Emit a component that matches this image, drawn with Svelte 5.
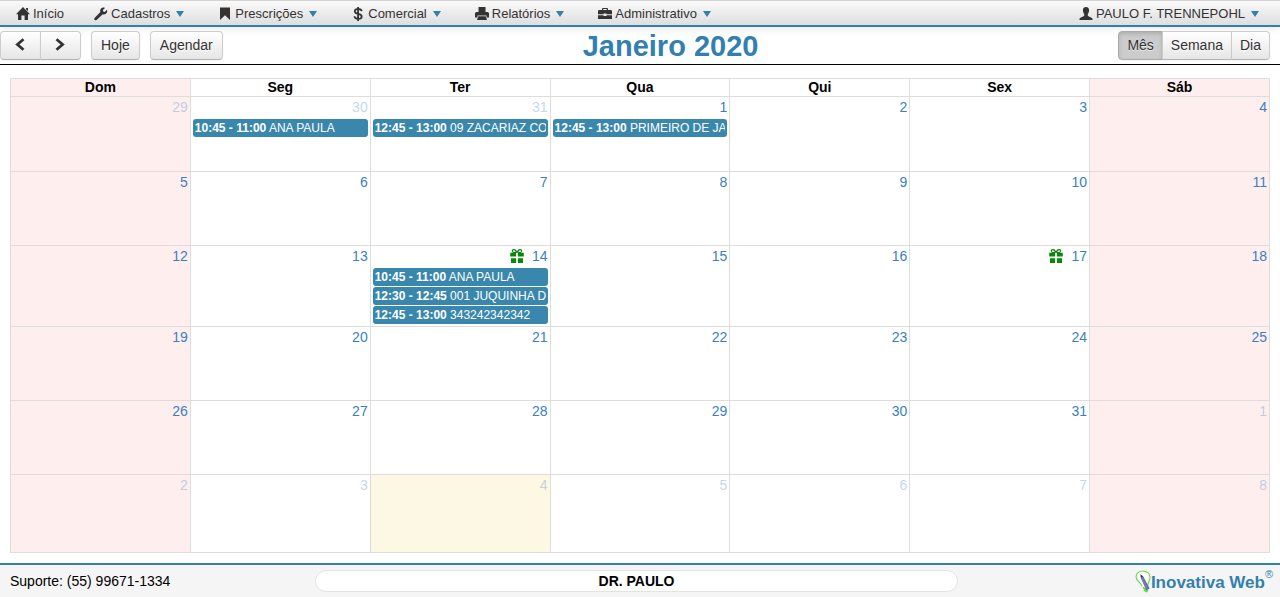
<script>
    const menu = [
        { label: 'Início', icon: 'home' },
        { label: 'Cadastros', icon: 'wrench', caret: true },
        { label: 'Prescrições', icon: 'bookmark', caret: true },
        { label: 'Comercial', icon: 'usd', caret: true },
        { label: 'Relatórios', icon: 'print', caret: true },
        { label: 'Administrativo', icon: 'briefcase', caret: true }
    ];

    const icons = {
        home: 'M7 0 14 7.2H12V13H8.6V8.4H5.4V13H2V7.2H0L7 0ZM10 .9H12V4.2L10 2.3Z',
        wrench: 'M12.9 2.8 10.8 4.9 9.2 4.6 8.9 3 11 .9C9.4.1 7.6.7 6.7 2 6.1 2.9 6 4 6.4 5L.8 10.7C.1 11.4.1 12.3.7 12.9 1.3 13.5 2.2 13.4 2.9 12.8L8.7 7.3C9.8 7.7 11.1 7.5 12.1 6.6 13.2 5.6 13.5 4.1 12.9 2.8Z',
        bookmark: 'M2 .5H12V13L7 8.3 2 13Z',
        print: 'M3.5 0H10.5V5H12.5Q14 5 14 6.5V10.5H11.5V8.5H2.5V10.5H0V6.5Q0 5 1.5 5H3.5ZM3.3 9.3H10.7L12 13H2Z',
        briefcase: 'M5 1H9Q10 1 10 2V3H12.8Q14 3 14 4.2V7.2H8.5V6.5H5.5V7.2H0V4.2Q0 3 1.2 3H4V2Q4 1 5 1ZM5.2 2.1V3H8.8V2.1ZM0 8.2H5.5V9H8.5V8.2H14V12H0Z',
        user: 'M7 0C9.2 0 10.2 1.5 10.1 3.6 10 5.4 9.2 6.5 8.8 7.2V8.7C8.8 9.3 13.5 10.4 13.5 12V13H.5V12C.5 10.4 5.2 9.3 5.2 8.7V7.2C4.8 6.5 4 5.4 3.9 3.6 3.8 1.5 4.8 0 7 0Z',
        gift: 'M1 3.8H3.1C.9 2.5 1.7-.1 4 .1 5.6.2 6.3 1.4 7 2.1 7.7 1.4 8.4.2 10 .1 12.3-.1 13.1 2.5 10.9 3.8H13.8V7.6H7.9V3.8H6.1V7.6H.2V3.8ZM3.7 1.2C2.4 1.3 2.8 2.9 4.2 2.9H5.7C5.2 2 4.7 1.1 3.7 1.2ZM10.3 1.2C9.3 1.1 8.8 2 8.3 2.9H9.8C11.2 2.9 11.6 1.3 10.3 1.2ZM1 9.2H6.1V14H1ZM7.9 9.2H13V14H7.9Z'
    };
    const strokes = {
        usd: 'M10.7 4.2C10.4 2.6 9.1 2 7.1 2 5.1 2 3.8 2.8 3.8 4.4 3.8 7.7 10.7 5.9 10.7 9.4 10.7 11.1 9.3 11.8 7.2 11.8 4.9 11.8 3.6 11 3.5 9.2M7.1 0V14',
        prev: 'M10.5 1.2 4.4 6.5 10.5 11.8',
        next: 'M3.5 1.2 9.6 6.5 3.5 11.8'
    };

    const weekDays = ['Dom', 'Seg', 'Ter', 'Qua', 'Qui', 'Sex', 'Sáb'];

    const events = {
        '11-30': [{ time: '10:45 - 11:00', title: 'ANA PAULA' }],
        '11-31': [{ time: '12:45 - 13:00', title: '09 ZACARIAZ COR' }],
        '0-1': [{ time: '12:45 - 13:00', title: 'PRIMEIRO DE JAN' }],
        '0-14': [
            { time: '10:45 - 11:00', title: 'ANA PAULA' },
            { time: '12:30 - 12:45', title: '001 JUQUINHA DO' },
            { time: '12:45 - 13:00', title: '343242342342' }
        ]
    };
    const birthdays = ['0-14', '0-17'];
    const today = '1-4';

    // six weeks, starting on the sunday before january 1st
    const weeks = [];
    for (let w = 0; w < 6; w++) {
        const week = [];
        for (let d = 0; d < 7; d++) {
            const date = new Date(2020, 0, w * 7 + d - 2);
            const key = date.getMonth() + '-' + date.getDate();
            week.push({
                key,
                day: date.getDate(),
                other: date.getMonth() !== 0,
                weekend: d === 0 || d === 6,
                events: events[key] || []
            });
        }
        weeks.push(week);
    }

    let view = $state('Mês');
</script>

{#snippet icon(name)}
    <svg class="icon" viewBox="0 0 14 14" aria-hidden="true">
        {#if strokes[name]}
            <path d={strokes[name]} fill="none" stroke="currentColor" stroke-width={name === 'usd' ? 1.8 : 2.8} />
        {:else}
            <path d={icons[name]} fill="currentColor" fill-rule="evenodd" />
        {/if}
    </svg>
{/snippet}

<div class="page">
    <nav class="menu">
        {#each menu as item}
            <a class="menu__item" href="#{item.icon}">
                {@render icon(item.icon)}
                <span>{item.label}</span>
                {#if item.caret}<i class="caret"></i>{/if}
            </a>
        {/each}
        <a class="menu__item menu__user" href="#user">
            {@render icon('user')}
            <span>PAULO F. TRENNEPOHL</span>
            <i class="caret"></i>
        </a>
    </nav>

    <header class="toolbar">
        <div class="toolbar__left">
            <div class="group group--nav">
                <button class="btn" aria-label="Anterior">{@render icon('prev')}</button>
                <button class="btn" aria-label="Próximo">{@render icon('next')}</button>
            </div>
            <button class="btn">Hoje</button>
            <button class="btn">Agendar</button>
        </div>
        <h1>Janeiro 2020</h1>
        <div class="group">
            {#each ['Mês', 'Semana', 'Dia'] as name}
                <button class="btn" class:active={view === name} onclick={() => (view = name)}>{name}</button>
            {/each}
        </div>
    </header>

    <main>
        <table class="calendar">
            <thead>
                <tr>
                    {#each weekDays as name, i}
                        <th class:weekend={i === 0 || i === 6}>{name}</th>
                    {/each}
                </tr>
            </thead>
            <tbody>
                {#each weeks as week}
                    <tr>
                        {#each week as cell}
                            <td class:weekend={cell.weekend} class:today={cell.key === today}>
                                <div class="day" class:other={cell.other}>
                                    {#if birthdays.includes(cell.key)}
                                        <span class="gift">{@render icon('gift')}</span>
                                    {/if}
                                    <a href="#{cell.key}">{cell.day}</a>
                                </div>
                                {#each cell.events as event}
                                    <a class="event" href="#{cell.key}">
                                        <span><b>{event.time}</b> {event.title}</span>
                                    </a>
                                {/each}
                            </td>
                        {/each}
                    </tr>
                {/each}
            </tbody>
        </table>
    </main>

    <footer>
        <span>Suporte: (55) 99671-1334</span>
        <div class="doctor">DR. PAULO</div>
        <a class="logo" href="#inovativa">
            <svg class="logo__bulb" viewBox="0 0 16 23" aria-hidden="true">
                <path d="M7 16.5C6.6 12.5 1 11.5 1 6.8 1 3.3 4 1 7.8 1 11.8 1 15 3.5 15 7 15 10.8 12.8 12 12.6 16" fill="#fff" stroke="#5fdc3c" stroke-width="1.1" />
                <path d="M8 17.5 13 21M9 19.8 12 22" stroke="#5fdc3c" stroke-width="1.6" />
                <path d="M5.6 4.6 8.6 7 14.6 18.6 11.4 20.2 6 8.4Z" fill="#327fb0" />
                <path d="M7.4 8 12 18.4" stroke="#d65a9c" stroke-width="1.2" />
                <path d="M5.6 4.6 5.9 7.6 8.2 6.6Z" fill="#333" />
            </svg>
            <span>Inovativa Web</span>
            <small>®</small>
        </a>
    </footer>
</div>

<style>
    :global(body) {
        margin: 0;
        background: #fff;
        font-family: "Liberation Sans", Arial, sans-serif;
        font-size: 14px;
        line-height: 20px;
        color: #000;
    }

    a {
        text-decoration: none;
    }

    .page {
        display: flex;
        flex-direction: column;
        min-height: 100vh;
    }

    .icon {
        display: block;
        flex: none;
        width: 14px;
        height: 14px;
    }

    .menu {
        display: flex;
        box-sizing: border-box;
        height: 27px;
        padding: 0 2px 0 1px;
        border-top: 1px solid #d4d4d4;
        border-bottom: 2px solid #327fb0;
        background: linear-gradient(#fafafa, #dedede);
        box-shadow: 0 1px 10px rgba(0, 0, 0, .1);
    }

    .menu__item {
        display: flex;
        align-items: center;
        gap: 3px;
        padding: 1px 15px 0;
        font-size: 13px;
        color: #333;
    }

    .menu__user {
        margin-left: auto;
    }

    .caret {
        margin: 0 4px 0 3px;
        border: 4px solid transparent;
        border-top: 6px solid #327fb0;
        border-bottom: 0;
    }

    .toolbar {
        display: flex;
        justify-content: space-between;
        align-items: center;
        padding: 4px 10px 4px 0;
        border-bottom: 1px solid #000;
    }

    .toolbar__left {
        display: flex;
        gap: 10px;
    }

    h1 {
        margin: 0;
        padding-top: 2px;
        font-size: 29px;
        line-height: 27px;
        color: #327fb0;
    }

    .btn {
        padding: 4px 9px;
        border: 1px solid #ccc;
        border-bottom-color: #b3b3b3;
        border-radius: 4px;
        background: linear-gradient(#fff, #e6e6e6);
        font: inherit;
        line-height: 19px;
        color: #333;
        text-shadow: 0 1px 1px rgba(255, 255, 255, .75);
        box-shadow: inset 0 1px 0 rgba(255, 255, 255, .2), 0 1px 2px rgba(0, 0, 0, .05);
    }

    .group {
        display: flex;
    }

    .group .btn {
        padding: 4px 8px;
    }

    .group .btn:not(:first-child) {
        margin-left: -1px;
        border-top-left-radius: 0;
        border-bottom-left-radius: 0;
    }

    .group .btn:not(:last-child) {
        border-top-right-radius: 0;
        border-bottom-right-radius: 0;
    }

    .group--nav .btn {
        padding: 4px 13px 5px 12px;
    }

    .btn.active {
        background: #ccc;
        border-color: #aaa;
        box-shadow: inset 0 2px 4px rgba(0, 0, 0, .15), 0 1px 2px rgba(0, 0, 0, .05);
    }

    main {
        padding: 13px 10px 10px;
    }

    .calendar {
        width: 100%;
        table-layout: fixed;
        border-spacing: 0;
        border: solid #ddd;
        border-width: 0 1px 1px 0;
    }

    .calendar th,
    .calendar td {
        padding: 0;
        border: solid #ddd;
        border-width: 1px 0 0 1px;
    }

    .calendar th {
        line-height: 17px;
    }

    .calendar td {
        height: 72px;
        padding-bottom: 1px;
        vertical-align: top;
    }

    .calendar tr:first-child td {
        height: 73px;
    }

    .calendar tr:last-child td {
        height: 76px;
    }

    .weekend {
        background: #fee;
    }

    .today {
        background: #fcf8e3;
    }

    .day {
        display: flex;
        justify-content: flex-end;
        align-items: center;
        padding: 0 2px 2px 0;
    }

    .day a {
        color: #3a7fc4;
    }

    .day.other a {
        opacity: .3;
    }

    .gift {
        margin-right: 8px;
        color: #0a870a;
    }

    .event {
        display: block;
        margin: 0 2px 1px;
        padding: 0 2px;
        border-radius: 3px;
        background: #3a87ad;
        font-size: 12px;
        line-height: 18px;
        color: #fff;
    }

    .event span {
        display: block;
        overflow: hidden;
        white-space: nowrap;
    }

    footer {
        display: grid;
        grid-template-columns: 61fr 129fr 63fr;
        align-items: center;
        box-sizing: border-box;
        height: 34px;
        margin-top: auto;
        padding: 0 7px 0 10px;
        border-top: 2px solid #327fb0;
        background: #f5f5f5;
    }

    .doctor {
        border: 1px solid #e3e3e3;
        border-radius: 11px;
        background: #fff;
        font-weight: bold;
        text-align: center;
    }

    .logo {
        display: flex;
        justify-content: flex-end;
        align-items: flex-end;
        font-size: 17px;
        font-weight: bold;
        color: #327fb0;
    }

    .logo__bulb {
        width: 16px;
        height: 23px;
    }

    .logo small {
        align-self: flex-start;
        font-size: 11px;
        line-height: 9px;
        font-weight: normal;
    }
</style>
